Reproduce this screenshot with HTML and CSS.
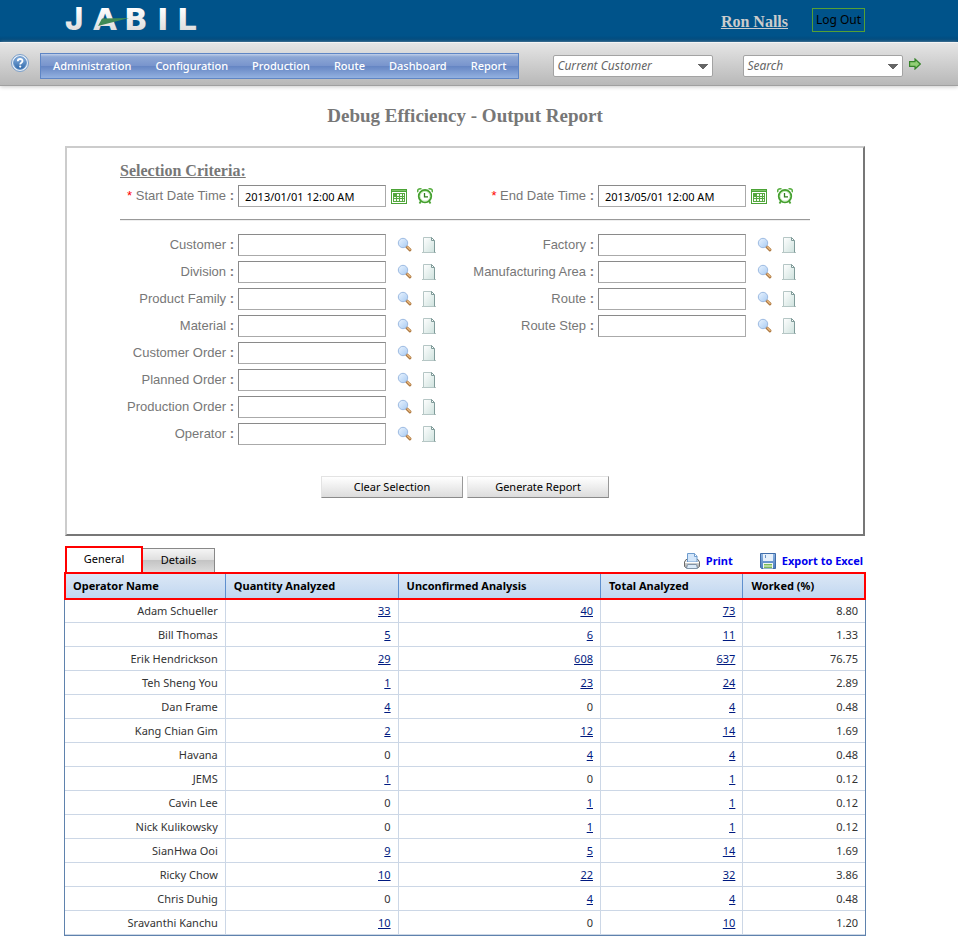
FILE: index.html
```html
<!DOCTYPE html>
<html lang="en">
<head>
<meta charset="utf-8">
<title>Debug Efficiency - Output Report</title>
<link rel="stylesheet" href="styles.css">
<script src="app.js" defer></script>
</head>
<body>
<svg class="sprite" aria-hidden="true">
  <defs>
    <linearGradient id="silver" x1="0" y1="0" x2="0" y2="1"><stop offset="0.2" stop-color="#fff"/><stop offset="1" stop-color="#d4d4d4"/></linearGradient>
    <linearGradient id="lens" x1="0" y1="0" x2="1" y2="1"><stop offset="0" stop-color="#eaf4ff"/><stop offset="1" stop-color="#a9cbf2"/></linearGradient>
    <linearGradient id="paper" x1="0" y1="0" x2="1" y2="1"><stop offset="0" stop-color="#fff"/><stop offset="1" stop-color="#cfe2de"/></linearGradient>
    <linearGradient id="orb" x1="0" y1="0" x2="0" y2="1"><stop offset="0" stop-color="#8db4e0"/><stop offset="1" stop-color="#2d66a8"/></linearGradient>
    <linearGradient id="disk" x1="0" y1="0" x2="0" y2="1"><stop offset="0" stop-color="#8fb5e2"/><stop offset="1" stop-color="#4b7dbf"/></linearGradient>
    <linearGradient id="casing" x1="0" y1="0" x2="0" y2="1"><stop offset="0" stop-color="#f5f5f5"/><stop offset="1" stop-color="#a5a5a5"/></linearGradient>
  </defs>
  <symbol id="calendar" viewBox="0 0 16 16">
    <path d="M0 1h16v15H0z" fill="#4ba336"/><path d="M1 4h14v11H1z" fill="#fff"/><path d="M1 2h14v1H1z" fill="#7cc568"/>
    <path d="M2 5h12v9H2z" fill="#55a83f"/>
    <path d="M6 6h2v2H6zm3 0h2v2H9zm3 0h1v2h-1zM3 9h2v1H3zm3 0h2v1H6zm3 0h2v1H9zm3 0h1v1h-1zM3 11h2v2H3zm3 0h2v2H6zm3 0h2v2H9zm3 0h1v2h-1z" fill="#f1faee"/>
  </symbol>
  <symbol id="clock" viewBox="0 0 16 16">
    <path d="M.8 4.200C0 2 2 .2 4.500 1M15.200 4.200C16 2 14 .2 11.500 1" fill="none" stroke="#5cb046" stroke-width="1.600"/>
    <path d="M4 13l-1.500 2.500M12 13l1.500 2.500" stroke="#4ba336" stroke-width="1.800"/>
    <circle cx="8" cy="8.200" r="6.200" fill="#fff" stroke="#45a02f" stroke-width="1.900"/>
    <circle cx="8" cy="8.200" r="4.900" fill="none" stroke="#b9e3ad" stroke-width=".8"/>
    <path d="M7.500 5v3.800H11" fill="none" stroke="#2f7d1d" stroke-width="1.300"/>
  </symbol>
  <symbol id="find" viewBox="0 0 16 16">
    <path d="M9.500 9.500l3.500 3.300" stroke="#a9743c" stroke-width="3" stroke-linecap="round"/><path d="M10.500 10l2.500 2.500" stroke="#e8b880" stroke-width="1.400" stroke-linecap="round"/>
    <circle cx="6" cy="6" r="4.700" fill="url(#lens)" stroke="#9dbbe2"/>
  </symbol>
  <symbol id="page" viewBox="0 0 16 16">
    <path d="M1 15.500h14" stroke="#b5c4c1"/><path d="M2.500.5h8l3 3v12h-11z" fill="url(#paper)" stroke="#b5c6c5"/><path d="M10.500.5v3h3z" fill="#fff" stroke="#7f9b99"/><path d="M13.500 4v11.500" stroke="#7f9b99"/>
  </symbol>
  <symbol id="help" viewBox="0 0 18 18">
    <circle cx="9" cy="9" r="8.500" fill="#e6eef7" stroke="#7b9fca"/><circle cx="9" cy="9" r="6.300" fill="url(#orb)" stroke="#5b8cc4"/>
    <path d="M6.800 7.300c0-3 4.700-3 4.700-.3 0 1.700-2.300 1.700-2.300 3.500" fill="none" stroke="#fff" stroke-width="1.800"/><circle cx="9.200" cy="12.600" r="1.100" fill="#fff"/>
  </symbol>
  <symbol id="go" viewBox="0 0 10 10"><path d="M.5 3H5V.8L9.400 5 5 9.200V7H.5z" fill="#93cf76" stroke="#37842a"/></symbol>
  <symbol id="printer" viewBox="0 0 16 16">
    <path d="M2 6.500.5 9v4.500l1 1h13l1-1V9L14 6.500z" fill="url(#casing)" stroke="#6a6a6a"/>
    <path d="M3.500 9V.5h7L13 3v6z" fill="#d3e6fa" stroke="#6e9cce"/><path d="M10.500.5v3H13" fill="#fff" stroke="#6e9cce"/>
    <path d="M1 9.500h14" stroke="#fff"/><path d="M3.500 11.500h9l1 4h-11z" fill="#dcebf9" stroke="#8194a8"/>
  </symbol>
  <symbol id="floppy" viewBox="0 0 16 16">
    <path d="M.5.500h15v15H1.500l-1-1z" fill="url(#disk)" stroke="#3f6ca9"/><path d="M3 1h10v7H3z" fill="#e6f0fb"/><path d="M5 2h1v3H5z" fill="#6c93c4"/>
    <path d="M3 10h10v5.500H3z" fill="#f3f9ef"/><path d="M4 11h8v1.500H4zm0 2.500h8V15H4z" fill="#7cba57"/>
  </symbol>
</svg>

<header class="banner">
  <svg class="logo" viewBox="0 0 140 42" role="img" aria-label="Jabil">
    <text class="logo-text" y="30" fill="url(#silver)"><tspan class="logo-initial" x="1">J</tspan><tspan x="29 60 93 113">ABIL</tspan></text>
    <path d="M38 18.500l27-.5-31 8z" fill="#3f8a55"/>
  </svg>
  <div class="account">
    <a class="user" href="#">Ron Nalls</a>
    <button class="logout" type="button">Log Out</button>
  </div>
</header>

<div class="toolbar">
  <a class="help" href="#" aria-label="Help"><svg><use href="#help"/></svg></a>
  <nav class="menu">
    <a href="#">Administration</a><a href="#">Configuration</a><a href="#">Production</a><a href="#">Route</a><a href="#">Dashboard</a><a href="#">Report</a>
  </nav>
  <select class="combo customer" aria-label="Current customer"><option>Current Customer</option></select>
  <select class="combo search" aria-label="Search"><option>Search</option></select>
  <a class="go" href="#" aria-label="Go"><svg><use href="#go"/></svg></a>
</div>

<main class="content">
  <h1>Debug Efficiency - Output Report</h1>
  <form class="panel">
    <h2>Selection Criteria:</h2>
    <div class="columns">
      <div class="field dated"><label for="start"><i>*</i> Start Date Time <b>:</b></label><input id="start" value="2013/01/01 12:00 AM"><svg><use href="#calendar"/></svg><svg><use href="#clock"/></svg></div>
      <div class="field dated end"><label for="end"><i>*</i> End Date Time <b>:</b></label><input id="end" value="2013/05/01 12:00 AM"><svg><use href="#calendar"/></svg><svg><use href="#clock"/></svg></div>
    </div>
    <hr>
    <div class="columns">
      <div class="stack" data-fields="Customer|Division|Product Family|Material|Customer Order|Planned Order|Production Order|Operator"></div>
      <div class="stack end" data-fields="Factory|Manufacturing Area|Route|Route Step"></div>
    </div>
    <div class="actions"><button type="reset">Clear Selection</button><button type="button">Generate Report</button></div>
  </form>

  <div class="tabs">
    <button class="tab active" type="button">General</button><button class="tab" type="button">Details</button>
    <div class="exports">
      <a href="#"><svg><use href="#printer"/></svg>Print</a>
      <a href="#"><svg><use href="#floppy"/></svg>Export to Excel</a>
    </div>
  </div>
  <table class="report">
    <colgroup><col class="c1"><col class="c2"><col class="c3"><col class="c4"><col class="c5"></colgroup>
    <thead><tr><th>Operator Name</th><th>Quantity Analyzed</th><th>Unconfirmed Analysis</th><th>Total Analyzed</th><th>Worked (%)</th></tr></thead>
    <tbody></tbody>
  </table>
</main>
</body>
</html>
```
FILE: styles.css
```css
* { box-sizing: border-box; }
body { margin: 0; background: #fff; color: #333; font: 11px/16px "Noto Sans", "Open Sans", sans-serif; }
button, input, select { font: inherit; margin: 0; }
.sprite { position: absolute; width: 0; height: 0; }

.banner { display: flex; justify-content: space-between; align-items: flex-start; height: 42px; padding: 0 93px 0 64px; background: linear-gradient(#00538a 85%, #004575); }
.logo { width: 140px; height: 42px; }
.logo-text { font: bold 31px "DejaVu Sans", sans-serif; }
.logo-initial { font: 800 31px Inter, sans-serif; }
.account { display: flex; gap: 24px; padding-top: 8px; }
.user { padding-top: 5px; color: #ccc; font: bold 16px/18px "Liberation Serif", serif; }
.logout { width: 53px; height: 24px; padding: 0; border: 1px solid #55a035; background: none; color: #000; font-size: 12px; }

.toolbar { display: flex; align-items: flex-start; height: 44px; padding: 10px 12px 0 11px; border-top: 1px solid #f4f4f4; border-bottom: 1px solid #a0a0a0; background: linear-gradient(#e5e5e5, #b8b8b8); box-shadow: 0 1px 4px #ccc; }
.toolbar svg { display: block; width: 18px; height: 18px; }
.toolbar .help { margin-top: 1px; }
.menu { display: flex; margin-left: 11px; border: 1px solid #5f86c5; background: linear-gradient(#c0cfe9, #8da7d5 12%, #7995cd 48%, #6686c4 52%, #93b1e0); }
.menu a { padding: 4px 12px; color: #fff; font-weight: 500; text-decoration: none; }
.combo { appearance: none; flex: 0 1 160px; height: 22px; margin: 2px 0 0 34px; padding: 0 3px; border: 1px solid #a3a3a3; border-radius: 2px; color: #666; font-size: 12px; font-style: italic; background: linear-gradient(to top right, transparent 50%, #666 51%) right 4px top 8px / 5px 5px no-repeat, linear-gradient(to top left, transparent 50%, #666 51%) right 4px top 8px / 5px 5px no-repeat, #fff; background: linear-gradient(to bottom left, #666 50%, transparent 51%) right 9px top 8px / 5px 5px no-repeat, linear-gradient(to bottom right, #666 50%, transparent 51%) right 4px top 8px / 5px 5px no-repeat, #fff; }
.search { margin-left: 30px; }
.toolbar .go svg { width: 12px; height: 12px; margin: 5px 0 0 6px; }

.content { padding: 18px 93px 0 65px; }
h1 { margin: 0; color: #777; font: bold 19px/24px "Liberation Serif", serif; text-align: center; }
.panel { margin: 18px 0 0; padding: 14px 53px 36px; border: 2px solid; border-color: #ccc #777 #777 #ccc; }
h2 { margin: 0 0 3px; color: #777; font: bold 16px/18px "Liberation Serif", serif; text-decoration: underline; }
.columns { display: grid; grid-template-columns: 1fr 1fr; --label: 114px; }
.end { --label: 129px; }
.field { display: flex; align-items: center; height: 27px; }
.field label { flex: 0 0 var(--label); margin-right: 4px; color: #777; font: 13px/16px "Liberation Sans", sans-serif; text-align: right; white-space: nowrap; }
.field i { color: #f00; font-style: normal; }
.field input { width: 148px; height: 22px; margin-right: 11px; padding: 0 6px; border: 1px solid; border-color: #8a8a8a #aaa #aaa #8a8a8a; color: #000; background: #fff; }
.field svg { width: 16px; height: 16px; margin-right: 8px; }
.field.dated { height: 26px; }
.dated input { margin-right: 5px; }
.dated svg { margin-right: 10px; }
hr { height: 2px; margin: 10px 0; border: 0; border-top: 1px solid #999; border-bottom: 1px solid #eee; }
.actions { display: flex; justify-content: center; gap: 4px; margin-top: 29px; }
.actions button { width: 142px; height: 22px; padding: 0; border: 1px solid; border-color: #e3e3e3 #999 #8a8a8a #e3e3e3; color: #000; background: linear-gradient(#fff, #dcdcdc); }

.tabs { display: flex; align-items: flex-end; margin-top: 10px; }
.tab { width: 72px; height: 25px; padding: 0 0 2px; border: 1px solid #888; border-left: 0; color: #000; background: linear-gradient(#f5f5f5, #e0e0e0 46%, #c4c4c4 50%, #dcdcdc); }
.active { width: 78px; height: 27px; border: 2px solid #f00; border-bottom-width: 1px; background: #fff; }
.exports { display: flex; gap: 27px; margin-left: auto; padding-right: 2px; }
.exports a { display: flex; gap: 6px; padding-bottom: 4px; color: #00e; font-weight: 700; text-decoration: none; }
.exports svg { width: 16px; height: 16px; }

.report { width: calc(100% + 2px); margin: 0 -1px; border-collapse: separate; border-spacing: 0; table-layout: fixed; border: 1px solid #5f82ad; border-top: 0; }
.c1 { width: 20.1%; } .c2 { width: 21.6%; } .c3 { width: 25.3%; } .c4 { width: 17.8%; }
th { height: 26px; padding: 0 8px; border-right: 1px solid #5f8fce; color: #000; text-align: left; font-weight: 700; background: linear-gradient(#dce8f6, #c0d6f0); }
thead { outline: 2px solid #f00; outline-offset: -1px; }
th:last-child { border-right: 0; }
td { height: 24px; padding: 0 7px; border-right: 1px solid #ccd7e6; border-bottom: 1px solid #ccd7e6; text-align: right; }
td:last-child { border-right: 0; }
td a { color: #001a80; }
```
FILE: app.js
```js
document.querySelectorAll('.stack').forEach(function (stack) {
  stack.innerHTML = stack.dataset.fields.split('|').map(function (name) {
    var id = name.toLowerCase().replace(/ /g, '-');
    return '<div class="field"><label for="' + id + '">' + name + ' <b>:</b></label><input id="' + id + '">' +
      '<svg><use href="#find"/></svg><svg><use href="#page"/></svg></div>';
  }).join('');
});

var rows = [
  ['Adam Schueller', 33, 40, 73, '8.80'],
  ['Bill Thomas', 5, 6, 11, '1.33'],
  ['Erik Hendrickson', 29, 608, 637, '76.75'],
  ['Teh Sheng You', 1, 23, 24, '2.89'],
  ['Dan Frame', 4, 0, 4, '0.48'],
  ['Kang Chian Gim', 2, 12, 14, '1.69'],
  ['Havana', 0, 4, 4, '0.48'],
  ['JEMS', 1, 0, 1, '0.12'],
  ['Cavin Lee', 0, 1, 1, '0.12'],
  ['Nick Kulikowsky', 0, 1, 1, '0.12'],
  ['SianHwa Ooi', 9, 5, 14, '1.69'],
  ['Ricky Chow', 10, 22, 32, '3.86'],
  ['Chris Duhig', 0, 4, 4, '0.48'],
  ['Sravanthi Kanchu', 10, 0, 10, '1.20']
];
document.querySelector('.report tbody').innerHTML = rows.map(function (row) {
  return '<tr>' + row.map(function (value) {
    return '<td>' + (typeof value === 'number' && value ? '<a href="#">' + value + '</a>' : value) + '</td>';
  }).join('') + '</tr>';
}).join('');
```
